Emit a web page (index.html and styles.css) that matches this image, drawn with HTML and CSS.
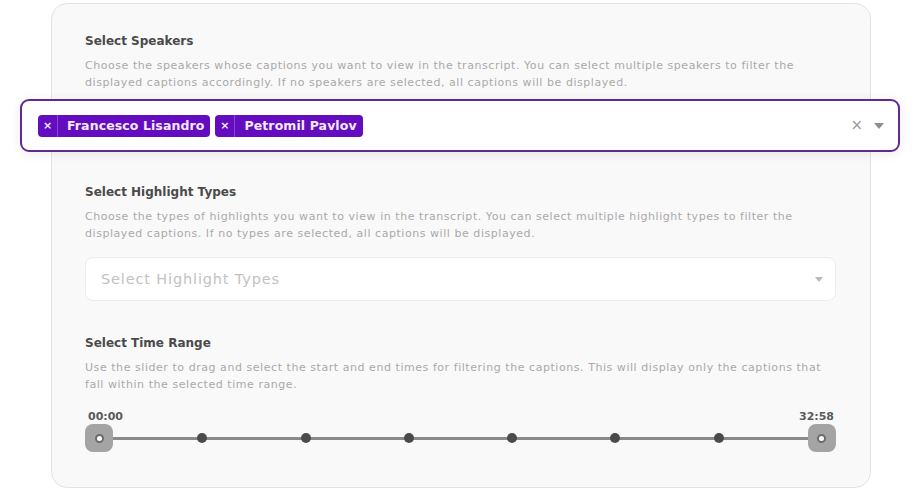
FILE: index.html
```html
<!DOCTYPE html>
<html>
<head>
<meta charset="utf-8">
<link rel="stylesheet" href="styles.css">
</head>
<body>
<div class="card">
  <section class="group speakers">
    <h3 class="title">Select Speakers</h3>
    <p class="desc">Choose the speakers whose captions you want to view in the transcript. You can select multiple speakers to filter the displayed captions accordingly. If no speakers are selected, all captions will be displayed.</p>
    <div class="multi">
      <div class="tags">
        <span class="tag"><span class="tag-x">×</span><span class="tag-label">Francesco Lisandro</span></span>
        <span class="tag"><span class="tag-x">×</span><span class="tag-label">Petromil Pavlov</span></span>
      </div>
      <div class="indicators">
        <span class="clear">×</span>
        <span class="caret"></span>
      </div>
    </div>
  </section>
  <section class="group">
    <h3 class="title">Select Highlight Types</h3>
    <p class="desc">Choose the types of highlights you want to view in the transcript. You can select multiple highlight types to filter the displayed captions. If no types are selected, all captions will be displayed.</p>
    <div class="select">
      <span class="placeholder">Select Highlight Types</span>
      <span class="caret light"></span>
    </div>
  </section>
  <section class="group">
    <h3 class="title">Select Time Range</h3>
    <p class="desc">Use the slider to drag and select the start and end times for filtering the captions. This will display only the captions that fall within the selected time range.</p>
    <div class="range-labels"><span>00:00</span><span>32:58</span></div>
    <div class="slider">
      <span class="handle"><span class="knob"></span></span>
      <span class="seg"></span><span class="dot"></span>
      <span class="seg"></span><span class="dot"></span>
      <span class="seg"></span><span class="dot"></span>
      <span class="seg"></span><span class="dot"></span>
      <span class="seg"></span><span class="dot"></span>
      <span class="seg"></span><span class="dot"></span>
      <span class="seg"></span>
      <span class="handle"><span class="knob"></span></span>
    </div>
  </section>
</div>
</body>
</html>
```

FILE: styles.css
```css
* { box-sizing: border-box; }
html, body { margin: 0; padding: 0; background: #ffffff; }
body {
  font-family: "DejaVu Sans", "Open Sans", sans-serif;
  padding: 3px 0 0 51px;
}
.card {
  width: 820px;
  height: 485px;
  background: #f9f9f9;
  border: 1px solid #e3e3e3;
  border-radius: 16px;
  padding: 28px 34px 0 33px;
}
.group { margin: 0; }
.title {
  margin: 0;
  font-size: 12px;
  font-weight: bold;
  color: #4a4a4a;
  line-height: 18px;
}
.desc {
  margin: 8px 0 0;
  font-size: 11px;
  letter-spacing: 0.55px;
  line-height: 16.5px;
  color: #a9a9a9;
  width: 751px;
}
.multi {
  margin: 8px -64px 0 -65px;
  height: 53px;
  background: #fff;
  border: 2px solid #5f2a92;
  border-radius: 9px;
  box-shadow: 0 2px 12px rgba(0,0,0,0.08);
  display: flex;
  align-items: center;
  justify-content: space-between;
  padding: 0 14px 0 16px;
}
.tags { display: flex; gap: 5px; }
.tag {
  display: flex;
  align-items: stretch;
  height: 22px;
  background: #640dc0;
  border-radius: 4px;
  color: #f3eaff;
}
.tag-x {
  width: 20px;
  display: flex;
  align-items: center;
  justify-content: center;
  font-size: 11px;
  font-weight: bold;
  border-right: 1px solid #8348cf;
}
.tag-label {
  display: flex;
  align-items: center;
  padding: 0 6px 0 9px;
  font-size: 12.5px;
  font-weight: bold;
  letter-spacing: 0.1px;
}
.indicators { display: flex; align-items: center; gap: 11px; }
.clear { color: #9a9a9a; font-size: 15px; line-height: 1; }
.caret {
  width: 0; height: 0;
  border-left: 5px solid transparent;
  border-right: 5px solid transparent;
  border-top: 6px solid #8e8e8e;
}
.caret.light { border-top-color: #b8b8b8; border-left-width: 4px; border-right-width: 4px; border-top-width: 5px; }
.speakers { margin-bottom: 31px; }
.select {
  margin-top: 15px;
  height: 44px;
  background: #fff;
  border: 1px solid #ececec;
  border-radius: 8px;
  display: flex;
  align-items: center;
  justify-content: space-between;
  padding: 0 12px 0 15px;
  margin-bottom: 33px;
}
.placeholder { font-size: 14.5px; color: #c2c2c2; letter-spacing: 0.85px; }
.range-labels {
  margin-top: 17px;
  display: flex;
  justify-content: space-between;
  font-size: 11px;
  font-weight: bold;
  color: #5a5a5a;
  padding: 0 2px 0 3px;
  line-height: 14px;
}
.slider {
  margin-top: 0;
  display: flex;
  align-items: center;
  height: 28px;
}
.handle {
  width: 28px; height: 28px;
  background: #a4a4a4;
  border-radius: 8px;
  display: flex; align-items: center; justify-content: center;
  flex: none;
  position: relative;
  z-index: 1;
}
.handle:first-child { margin-right: -14px; }
.handle:last-child { margin-left: -14px; }
.knob {
  width: 9px; height: 9px; border-radius: 50%;
  background: #fff; border: 2px solid #6b6b6b;
}
.seg { flex: 1; height: 3px; background: #8a8a8a; }
.dot { width: 10px; height: 10px; border-radius: 50%; background: #4a4a4a; flex: none; margin: 0 -5px; position: relative; }
```
